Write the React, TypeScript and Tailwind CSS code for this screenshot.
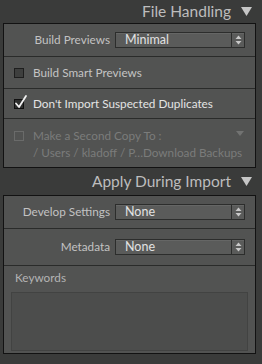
import React from "react";

const font = { fontFamily: 'Lato, "Liberation Sans", sans-serif' };

function Tri({ className = "" }: { className?: string }) {
  return (
    <svg width="11" height="9" viewBox="0 0 11 9" className={className}>
      <polygon points="0,0 11,0 5.5,9" fill="currentColor" />
    </svg>
  );
}

function Select({ value }: { value: string }) {
  return (
    <div className="flex h-[16px] w-[130px] items-stretch border border-[#2c2d2c] bg-[#5a5b5a] shadow-[inset_0_1px_0_#656665]">
      <div className="flex flex-1 items-center pl-[9px] text-[12.5px] leading-none text-[#e2e2e2]">{value}</div>
      <div className="flex w-[13px] items-center justify-center border-l border-[#2c2d2c]">
        <svg width="7" height="10" viewBox="0 0 7 10">
          <polygon points="3.5,0.5 6.5,4 0.5,4" fill="#c8c8c8" />
          <polygon points="0.5,6 6.5,6 3.5,9.5" fill="#c8c8c8" />
        </svg>
      </div>
    </div>
  );
}

function Header({ title }: { title: string }) {
  return (
    <div className="flex items-center justify-end gap-[10px] pr-[10px] text-[#bdbdbd]">
      <span className="text-[15.5px] leading-none">{title}</span>
      <Tri className="text-[#c6c6c6]" />
    </div>
  );
}

export default function App() {
  return (
    <div className="h-[364px] w-[262px] overflow-hidden bg-[#3a3b3a]" style={font}>
      <div className="h-[23px] pt-[4px]">
        <Header title="File Handling" />
      </div>
      <div className="ml-[3px] mr-[6px] border border-[#121212] bg-[#525352]">
        {/* Build Previews */}
        <div className="flex h-[33px] items-center border-b border-[#2a2b2a]">
          <div className="w-[111px] pr-[5px] text-right text-[11.75px] text-[#c2c2c2]">Build Previews</div>
          <Select value="Minimal" />
        </div>
        {/* Build Smart Previews */}
        <div className="flex h-[32px] items-center gap-[9px] border-b border-[#2a2b2a] pl-[10px]">
          <div className="h-[10px] w-[10px] border border-[#1e1e1e] bg-[#3e3f3e]" />
          <span className="text-[11.75px] text-[#c4c4c4]">Build Smart Previews</span>
        </div>
        {/* Don't Import */}
        <div className="flex h-[30px] items-center gap-[9px] border-b border-[#2a2b2a] pl-[10px]">
          <div className="relative h-[10px] w-[10px] border border-[#111] bg-[#2e2f2e]">
            <svg width="14" height="16" viewBox="0 0 14 16" className="absolute left-[-1px] top-[-6px]">
              <path d="M2 9.5 L5 13 L12 2" stroke="#f2f2f2" strokeWidth="1.8" fill="none" strokeLinecap="round" strokeLinejoin="round" />
            </svg>
          </div>
          <span className="text-[11.75px] text-[#e4e4e4]">Don't Import Suspected Duplicates</span>
        </div>
        {/* Second Copy */}
        <div className="flex h-[48px] flex-col pl-[10px] pr-[10px] pt-[8px]">
          <div className="flex items-center gap-[9px]">
            <div className="h-[10px] w-[10px] border border-[#6a6b6a]" />
            <span className="flex-1 text-[11.75px] leading-[17px] text-[#7b7c7b]">Make a Second Copy To :</span>
            <svg width="8" height="5" viewBox="0 0 8 5" className="mr-[1px] mb-[4px]">
              <polygon points="0,0 8,0 4,5" fill="#727372" />
            </svg>
          </div>
          <div className="whitespace-nowrap pl-[19px] text-[11.75px] leading-[18px] text-[#7b7c7b]">/ Users / kladoff / P…Download Backups</div>
        </div>
      </div>
      <div className="h-[27px] pt-[6px]">
        <Header title="Apply During Import" />
      </div>
      <div className="ml-[3px] mr-[6px] border border-[#121212] bg-[#525352]">
        <div className="flex h-[33px] items-center border-b border-[#2a2b2a]">
          <div className="w-[111px] pr-[5px] text-right text-[11.75px] text-[#c2c2c2]">Develop Settings</div>
          <Select value="None" />
        </div>
        <div className="flex h-[37px] items-center border-b border-[#2a2b2a]">
          <div className="w-[111px] pr-[5px] text-right text-[11.75px] text-[#c2c2c2]">Metadata</div>
          <Select value="None" />
        </div>
        <div className="flex h-[87px] flex-col px-[7px] pt-[3px]">
          <div className="pl-[4px] text-[11.75px] leading-[18px] text-[#b4b4b4]">Keywords</div>
          <div className="mt-[5px] h-[59px] border border-[#424342] bg-[#4c4d4c]" />
        </div>
      </div>
    </div>
  );
}
